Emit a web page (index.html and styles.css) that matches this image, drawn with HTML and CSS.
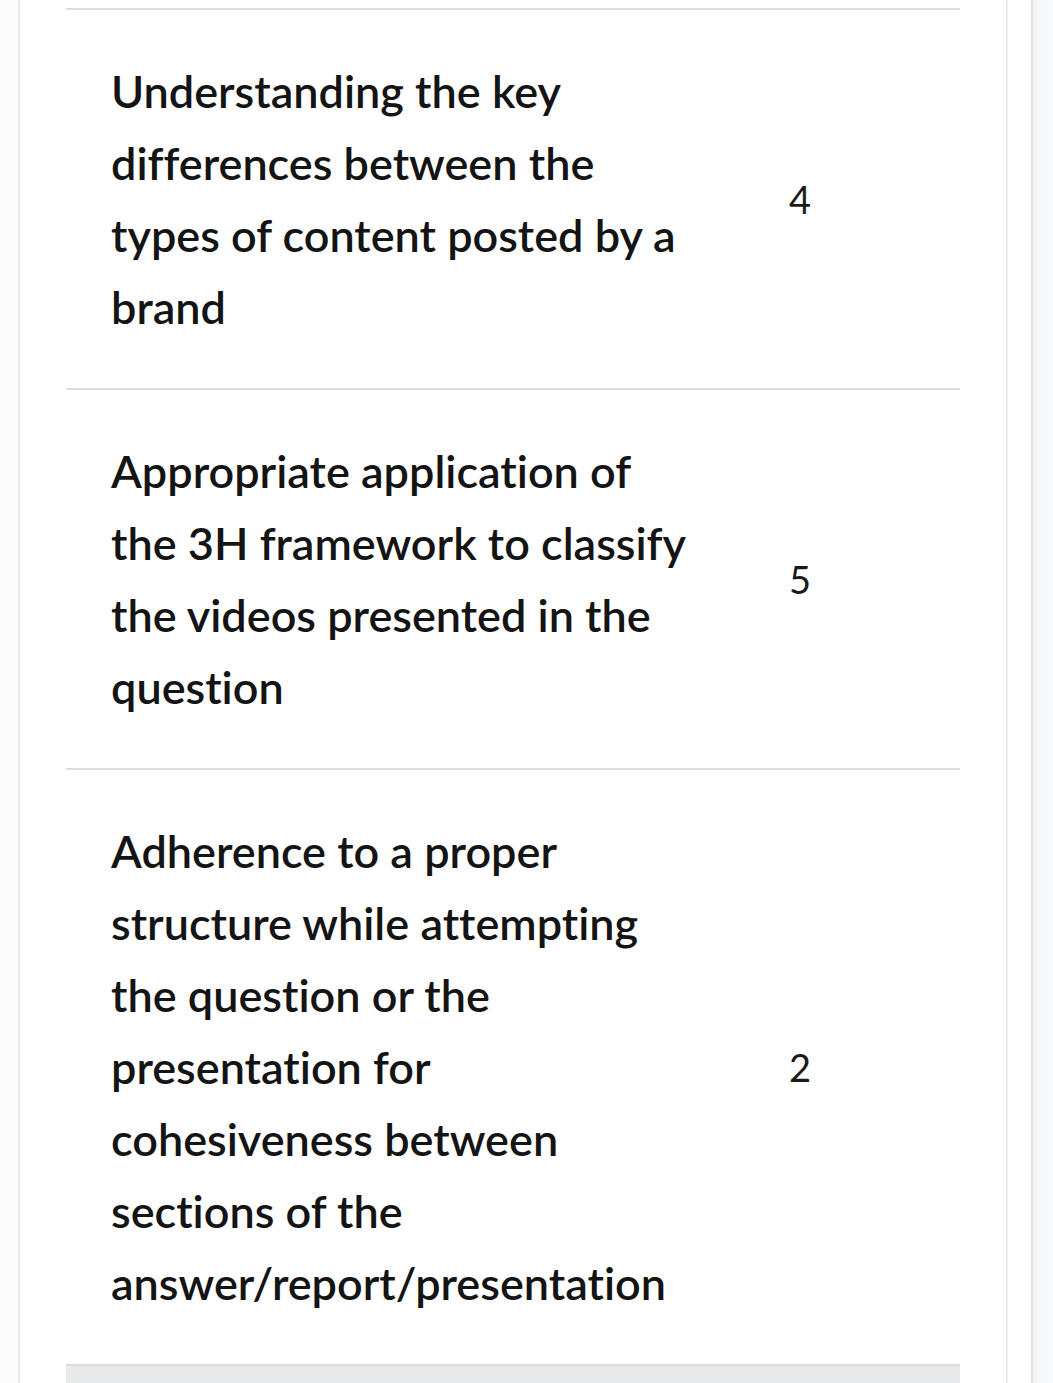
FILE: index.html
```html
<!DOCTYPE html>
<html>
<head>
<meta charset="utf-8">
<link rel="stylesheet" href="styles.css">
</head>
<body>
<div class="page">
  <div class="gutter"></div>
  <div class="card">
    <div class="table">
      <div class="row">
        <div class="crit">Understanding the key differences between the types of content posted by a brand</div>
        <div class="pts">4</div>
      </div>
      <div class="row">
        <div class="crit">Appropriate application of the 3H framework to classify the videos presented in the question</div>
        <div class="pts">5</div>
      </div>
      <div class="row">
        <div class="crit">Adherence to a proper structure while attempting the question or the presentation for cohesiveness between sections of the answer/report/presentation</div>
        <div class="pts">2</div>
      </div>
      <div class="footer"></div>
    </div>
  </div>
  <div class="spacer"></div>
  <div class="scroll"></div>
</div>
</body>
</html>
```
FILE: styles.css
```css
html, body {
  margin: 0;
  padding: 0;
  height: 1383px;
  overflow: hidden;
}
body {
  background: #fbfbfb;
  font-family: Lato, "Noto Sans", sans-serif;
  color: #111;
}
.page {
  display: flex;
  height: 1383px;
}
.gutter {
  width: 18px;
  background: #fbfbfb;
}
.card {
  width: 990px;
  background: #fff;
  border-left: 2px solid #ececec;
  border-right: 2px solid #ececec;
  padding: 8px 0 0 46px;
  box-sizing: border-box;
}
.table {
  width: 894px;
}
.row {
  display: flex;
  align-items: center;
  border-top: 2px solid #dedede;
  padding: 45px 0 45px 45px;
}
.crit {
  width: 580px;
  font-size: 45px;
  line-height: 72px;
  font-weight: 600;
  color: #141414;
  font-variant-ligatures: none;
}
.pts {
  margin-left: 98px;
  font-size: 38px;
  font-weight: 400;
  color: #1a1a1a;
}
.footer {
  height: 40px;
  background: #e8e9eb;
  border-top: 2px solid #dcdcdc;
}
.spacer {
  width: 23px;
  background: #fff;
}
.scroll {
  flex: 1;
  border-left: 2px solid #e2e2e2;
  background: linear-gradient(to right, #eceeef, #f7f8f9 6px, #f8f9fa);
}
```
